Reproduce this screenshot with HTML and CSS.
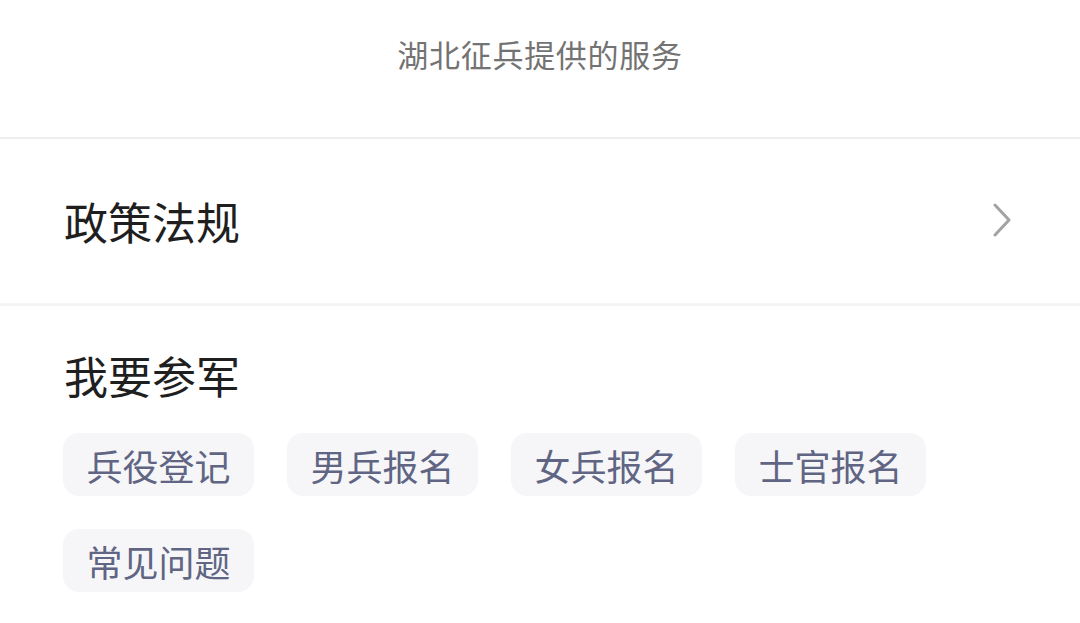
FILE: index.html
```html
<!DOCTYPE html>
<html lang="zh-CN">
<head>
<meta charset="utf-8">
<link rel="stylesheet" href="styles.css">
</head>
<body>
<div class="page">
  <header class="header">湖北征兵提供的服务</header>
  <div class="row-link">
    <span class="row-title">政策法规</span>
    <svg class="chevron" width="20" height="34" viewBox="0 0 20 34"><path d="M3 2 L17 17 L3 32" fill="none" stroke="#a3a3a3" stroke-width="3" stroke-linecap="round" stroke-linejoin="round"/></svg>
  </div>
  <section class="join">
    <h2 class="join-title">我要参军</h2>
    <div class="tags">
      <span class="tag">兵役登记</span>
      <span class="tag">男兵报名</span>
      <span class="tag">女兵报名</span>
      <span class="tag">士官报名</span>
      <span class="tag">常见问题</span>
    </div>
  </section>
</div>
</body>
</html>
```

FILE: styles.css
```css
html, body {
  margin: 0;
  padding: 0;
  background: #ffffff;
}
body {
  font-family: "Noto Sans CJK SC", "Noto Sans", sans-serif;
  width: 1080px;
  height: 623px;
  overflow: hidden;
}
.page {
  display: flex;
  flex-direction: column;
}
.header {
  height: 139px;
  display: flex;
  justify-content: center;
  align-items: flex-start;
  padding-top: 38px;
  box-sizing: border-box;
  font-size: 31px;
  line-height: 32px;
  letter-spacing: 0.7px;
  color: #737373;
  border-bottom: 2px solid #eeeeee;
}
.row-link {
  height: 167px;
  box-sizing: border-box;
  display: flex;
  align-items: center;
  justify-content: space-between;
  padding: 0 68px 0 64px;
  border-bottom: 3px solid #f4f4f4;
}
.row-title {
  font-size: 44px;
  line-height: 44px;
  color: #1f1f1f;
  margin-top: -1px;
}
.chevron {
  display: block;
  margin-top: -2px;
}
.join {
  padding: 47px 64px 0 63px;
}
.join-title {
  margin: 0 0 36px 1px;
  font-size: 44px;
  line-height: 44px;
  font-weight: normal;
  color: #1f1f1f;
}
.tags {
  display: flex;
  flex-wrap: wrap;
  column-gap: 33px;
  row-gap: 33px;
  width: 900px;
}
.tag {
  width: 191px;
  height: 63px;
  box-sizing: border-box;
  display: flex;
  align-items: center;
  justify-content: center;
  background: #f6f6f9;
  border-radius: 16px;
  font-size: 36px;
  line-height: 36px;
  color: #5f6582;
}
```
